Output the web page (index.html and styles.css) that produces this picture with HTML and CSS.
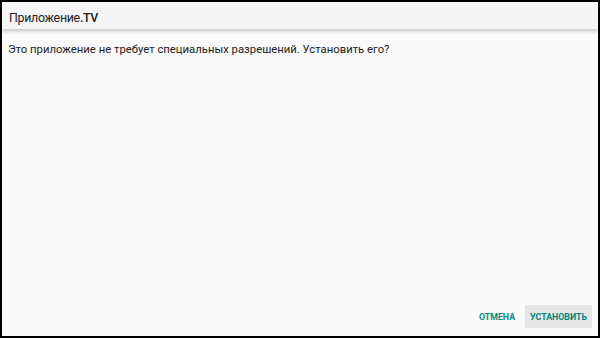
FILE: index.html
```html
<!DOCTYPE html>
<html lang="ru">

<head>
    <meta charset="UTF-8">
    <meta name="viewport" content="width=device-width, initial-scale=1.0">
    <title>Приложение.TV</title>
    <link rel="stylesheet" href="styles.css">
</head>

<body>

    <div class="dialog">
        <div class="dialog-header">
            <span class="app-name">Приложение</span><span class="app-suffix">.TV</span>
        </div>

        <div class="dialog-body">
            <p>Это приложение не требует специальных разрешений. Установить его?</p>
        </div>

        <div class="dialog-actions">
            <button class="btn">ОТМЕНА</button>
            <button class="btn btn-focused">УСТАНОВИТЬ</button>
        </div>
    </div>

</body>

</html>
```

FILE: styles.css
```css
body {
    margin: 0;
    padding: 0;
    background-color: #000;
    font-family: 'Roboto', 'Noto Sans', sans-serif;
}

.dialog {
    width: 600px;
    height: 338px;
    box-sizing: border-box;
    border: 2px solid #000;
    background-color: #fafafa;
    display: flex;
    flex-direction: column;
}

.dialog-header {
    height: 27px;
    box-sizing: border-box;
    padding: 8px 0 0 7px;
    background-color: #f5f5f5;
    box-shadow: 0 2px 4px rgba(0, 0, 0, 0.22);
    font-size: 12.4px;
    letter-spacing: -0.3px;
    color: #212121;
    position: relative;
    z-index: 1;
}

.app-suffix {
    font-weight: 500;
}

.dialog-body {
    flex: 1;
    padding: 0 6px;
}

.dialog-body p {
    margin: 14px 0 0;
    font-size: 11.3px;
    color: #212121;
}

.dialog-actions {
    display: flex;
    justify-content: flex-end;
    align-items: center;
    gap: 5px;
    padding: 0 6px 8px 0;
}

.btn {
    font-family: 'Roboto', 'Noto Sans', sans-serif;
    font-size: 8.8px;
    font-weight: bold;
    color: #00897b;
    background: none;
    border: none;
    height: 23px;
    padding: 0 5px;
    cursor: pointer;
}

.btn-focused {
    background-color: #e6e6e6;
}
```
